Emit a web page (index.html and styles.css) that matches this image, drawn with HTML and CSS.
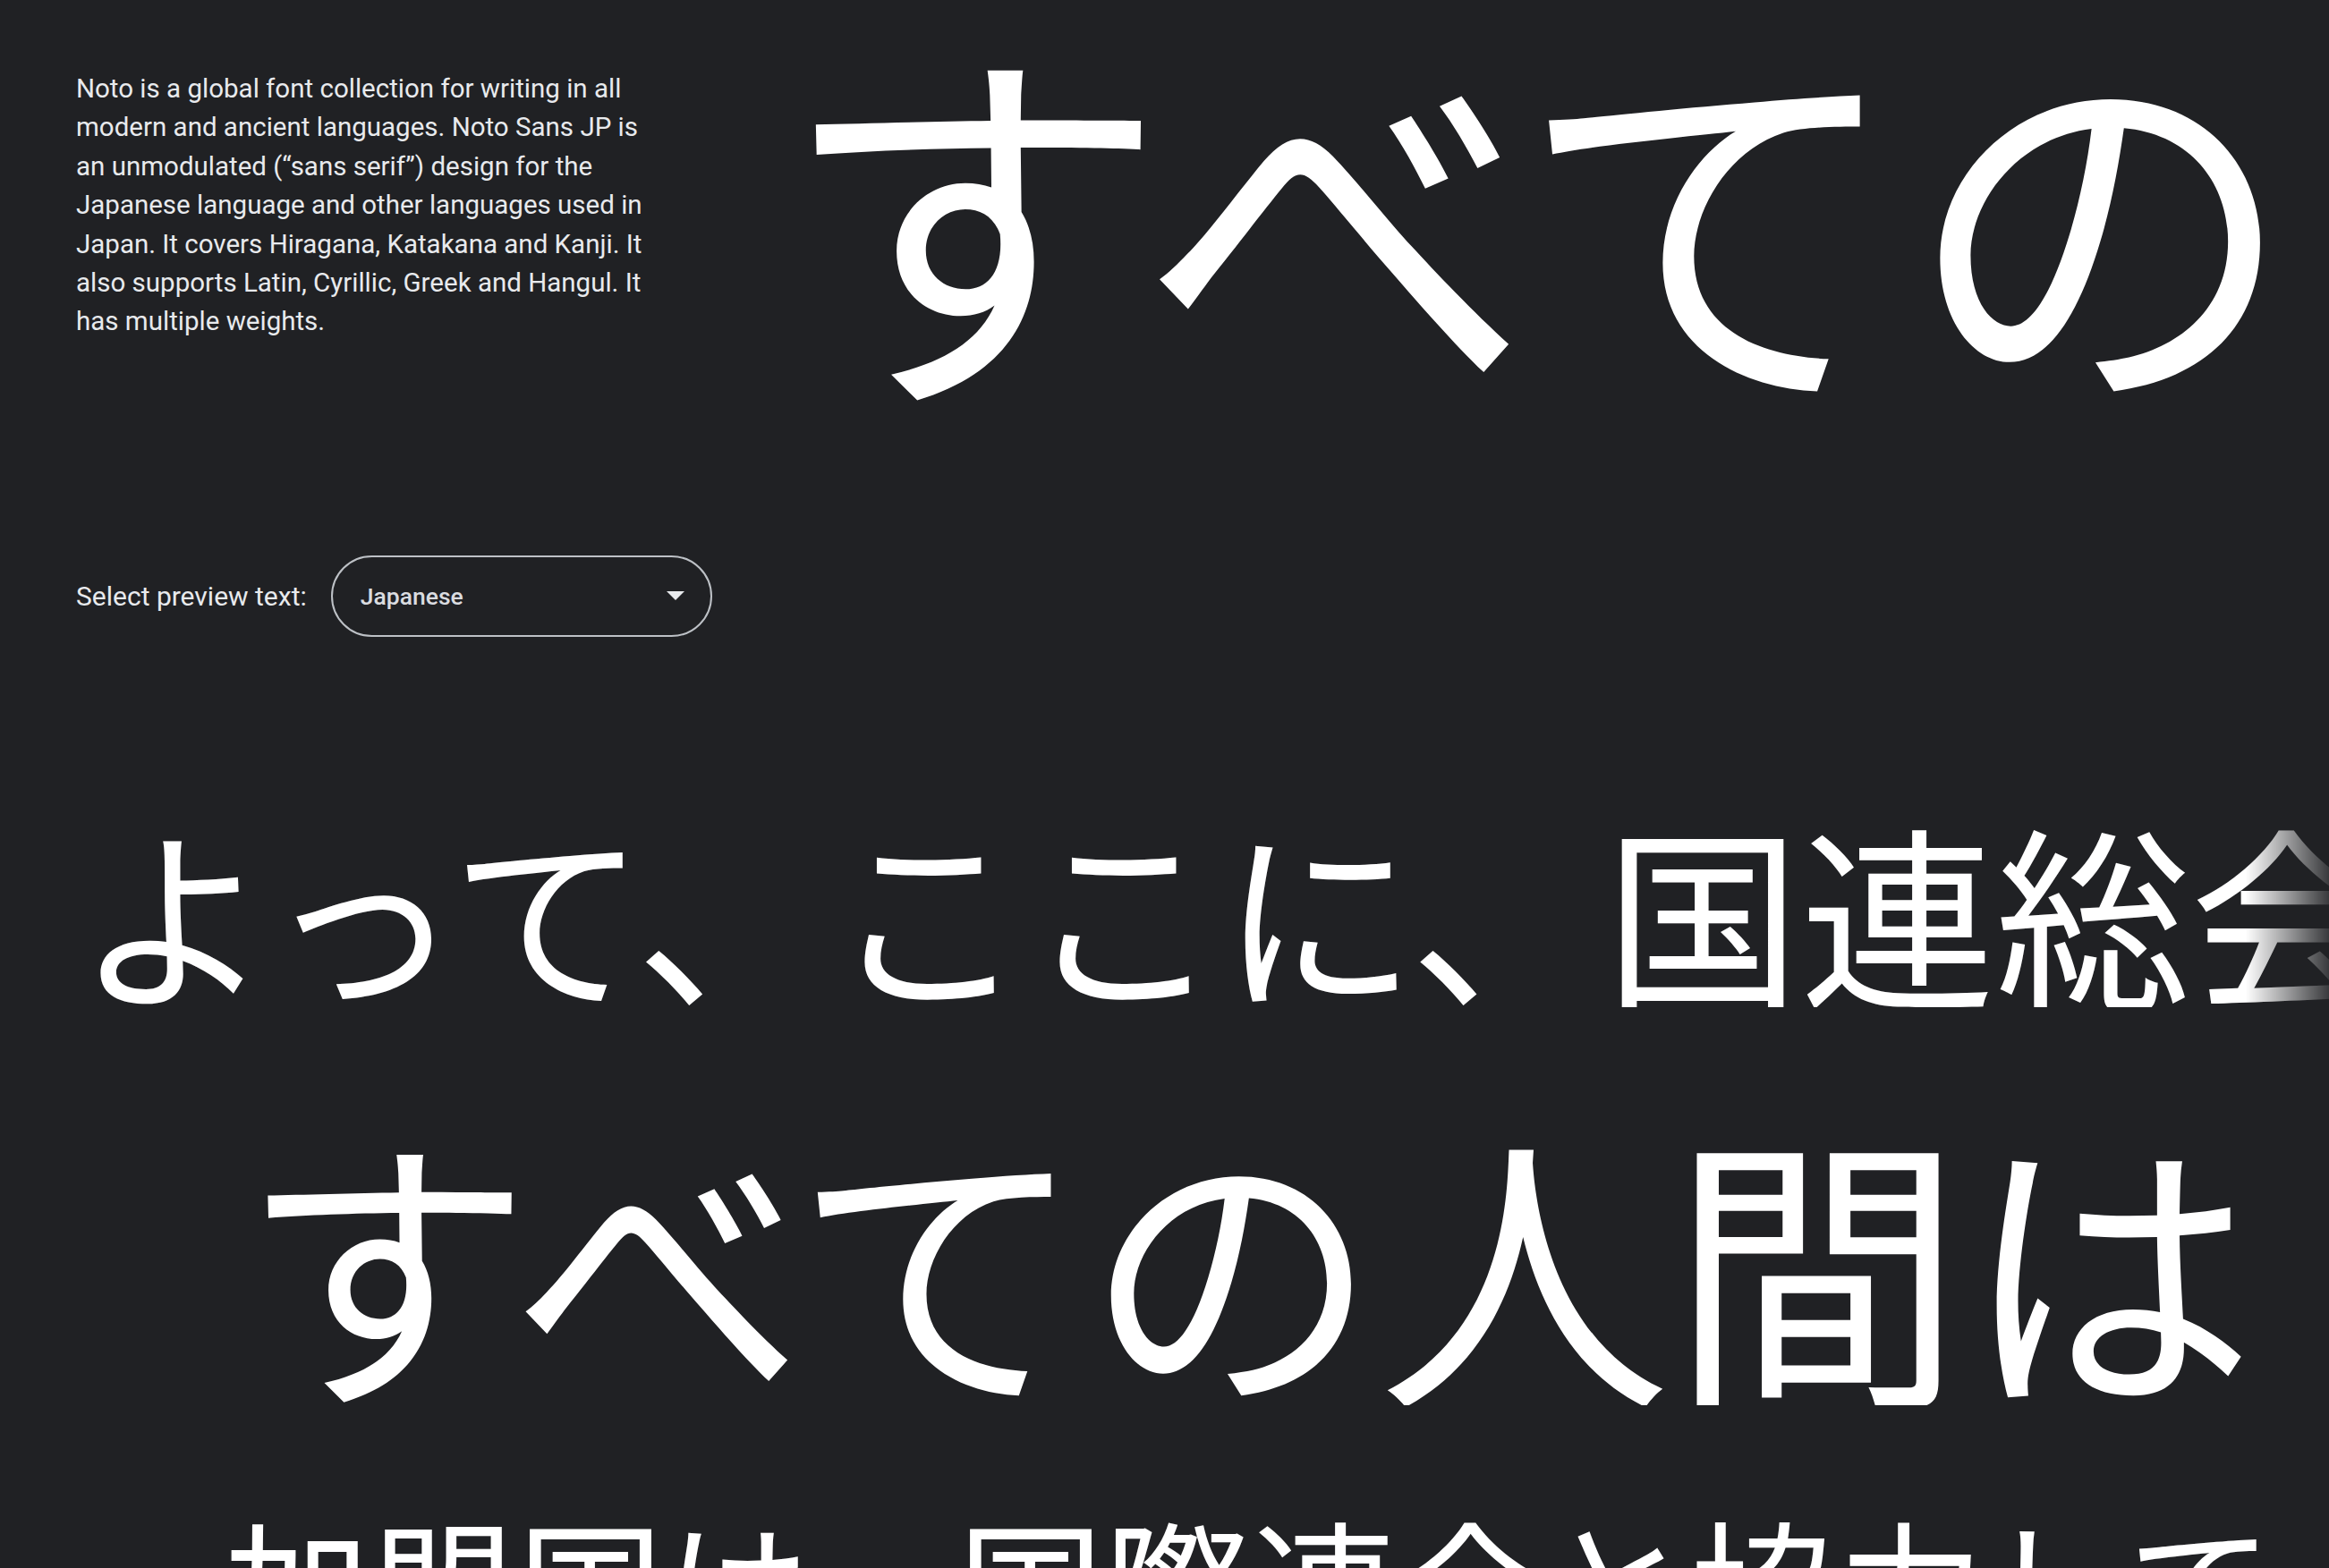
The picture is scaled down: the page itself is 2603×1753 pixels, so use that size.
FILE: index.html
```html
<!DOCTYPE html>
<html lang="en">
<head>
<meta charset="utf-8">
<title>Noto Sans JP</title>
<link rel="stylesheet" href="styles.css">
</head>
<body>
<main class="page">
  <section class="top">
    <div class="intro">
      <p class="about">Noto is a global font collection for writing in all<br>modern and ancient languages. Noto Sans JP is<br>an unmodulated (“sans serif”) design for the<br>Japanese language and other languages used in<br>Japan. It covers Hiragana, Katakana and Kanji. It<br>also supports Latin, Cyrillic, Greek and Hangul. It<br>has multiple weights.</p>
      <div class="picker">
        <span class="picker-label">Select preview text:</span>
        <div class="select">
          <span class="select-value">Japanese</span>
          <svg class="select-arrow" width="20" height="10" viewBox="0 0 20 10"><path d="M0 0 H20 L10 10 Z" fill="#e8eaed"/></svg>
        </div>
      </div>
    </div>
    <div class="hero" lang="ja">すべての</div>
  </section>
  <section class="samples" lang="ja">
    <div class="sample s2">よって、ここに、国連総会は、</div>
    <div class="sample s3">すべての人間は</div>
    <div class="sample s4">加盟国は、国際連合と協力して</div>
  </section>
</main>
</body>
</html>
```

FILE: styles.css
```css
html, body {
  margin: 0;
  padding: 0;
  background: #202124;
}
body {
  width: 2603px;
  height: 1753px;
  overflow: hidden;
  color: #e8eaed;
  font-family: Roboto, "Noto Sans", sans-serif;
}
.page {
  height: 1753px;
  overflow: hidden;
  padding: 0 0 0 85px;
}
.top {
  display: flex;
  align-items: flex-start;
}
.intro {
  width: 789px;
  flex: none;
  padding-top: 78px;
}
.about {
  margin: 0;
  font-size: 29.5px;
  line-height: 43.4px;
  white-space: nowrap;
}
.picker {
  display: flex;
  align-items: center;
  gap: 27px;
  margin-top: 239px;
}
.picker-label {
  font-size: 30px;
}
.select {
  box-sizing: border-box;
  width: 426px;
  height: 91px;
  border: 2px solid #bdc1c6;
  border-radius: 46px;
  display: flex;
  align-items: center;
  justify-content: space-between;
  padding: 0 29px 0 31px;
}
.select-value {
  font-size: 26.5px;
  font-weight: 500;
  color: #dadce0;
}
.hero {
  font-family: "Noto Sans CJK JP", sans-serif;
  font-size: 436px;
  line-height: 1;
  color: #fff;
  white-space: nowrap;
  margin-top: 16px;
  margin-left: -4px;
}
.samples {
  font-family: "Noto Sans CJK JP", sans-serif;
  color: #fff;
}
.sample {
  white-space: nowrap;
  line-height: 1;
  overflow: hidden;
}
.s2 {
  font-size: 218px;
  margin-top: 196px;
  -webkit-mask-image: linear-gradient(to right, #000 2425px, transparent 2530px);
  mask-image: linear-gradient(to right, #000 2425px, transparent 2530px);
}
.s3 {
  font-size: 327px;
  margin-top: 118px;
  padding-left: 183px;
}
.s4 {
  font-size: 164px;
  margin-top: 116px;
  padding-left: 165px;
}
```
